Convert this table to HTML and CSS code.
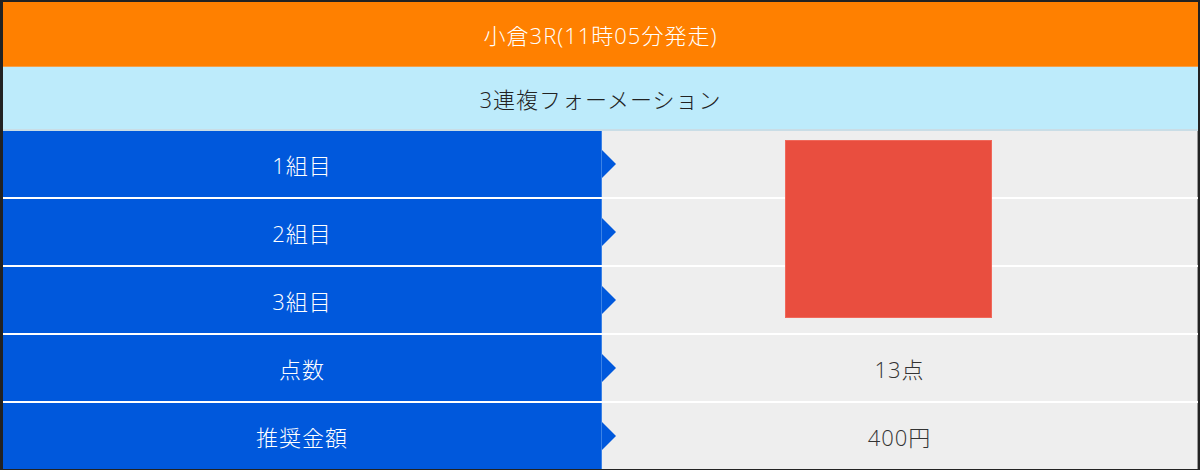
FILE: index.html
```html
<!DOCTYPE html>
<html lang="ja">
<head>
<meta charset="utf-8">
<link rel="stylesheet" href="styles.css">
</head>
<body>
<div class="page">
  <div class="title">小倉3R(11時05分発走)</div>
  <div class="subtitle">3連複フォーメーション</div>
  <div class="table">
    <div class="row"><div class="label">1組目</div><div class="value"></div></div>
    <div class="row"><div class="label">2組目</div><div class="value"></div></div>
    <div class="row"><div class="label">3組目</div><div class="value"></div></div>
    <div class="row"><div class="label">点数</div><div class="value">13点</div></div>
    <div class="row"><div class="label">推奨金額</div><div class="value">400円</div></div>
    <div class="mark"></div>
  </div>
</div>
</body>
</html>
```
FILE: styles.css
```css
html, body {
  margin: 0;
  padding: 0;
  background: #222;
  height: 470px;
  overflow: hidden;
}
.page {
  margin: 2px 2px 0 3px;
  background: #fff;
  font-family: "Open Sans", "Noto Sans CJK JP", sans-serif;
  font-size: 22px;
  font-weight: 300;
  letter-spacing: 1px;
}
.title {
  height: 64px;
  background: #ff8000;
  color: #fff;
  display: flex;
  align-items: center;
  justify-content: center;
  border-bottom: 1px solid #f4a04a;
}
.subtitle {
  height: 62px;
  background: #bdebfb;
  color: #222;
  display: flex;
  align-items: center;
  justify-content: center;
  border-bottom: 2px solid #c9dde6;
}
.table {
  position: relative;
  display: flex;
  flex-direction: column;
  gap: 2px;
  background: #fff;
}
.row {
  display: flex;
  height: 66px;
}
.label {
  position: relative;
  width: 598px;
  background: #0058dc;
  color: #fff;
  display: flex;
  align-items: center;
  justify-content: center;
  border-right: 1px solid #3b82e6;
}
.label::after {
  content: "";
  position: absolute;
  right: -15px;
  top: 50%;
  margin-top: -14px;
  border-left: 14px solid #0058dc;
  border-top: 14px solid transparent;
  border-bottom: 14px solid transparent;
}
.value {
  flex: 1;
  background: #eeeeee;
  color: #333;
  display: flex;
  align-items: center;
  justify-content: center;
  border-right: 1px solid #999;
}
.mark {
  position: absolute;
  left: 782px;
  top: 9px;
  width: 205px;
  height: 176px;
  background: #e94e3f;
  border: 1px solid #f0685a;
}
```
